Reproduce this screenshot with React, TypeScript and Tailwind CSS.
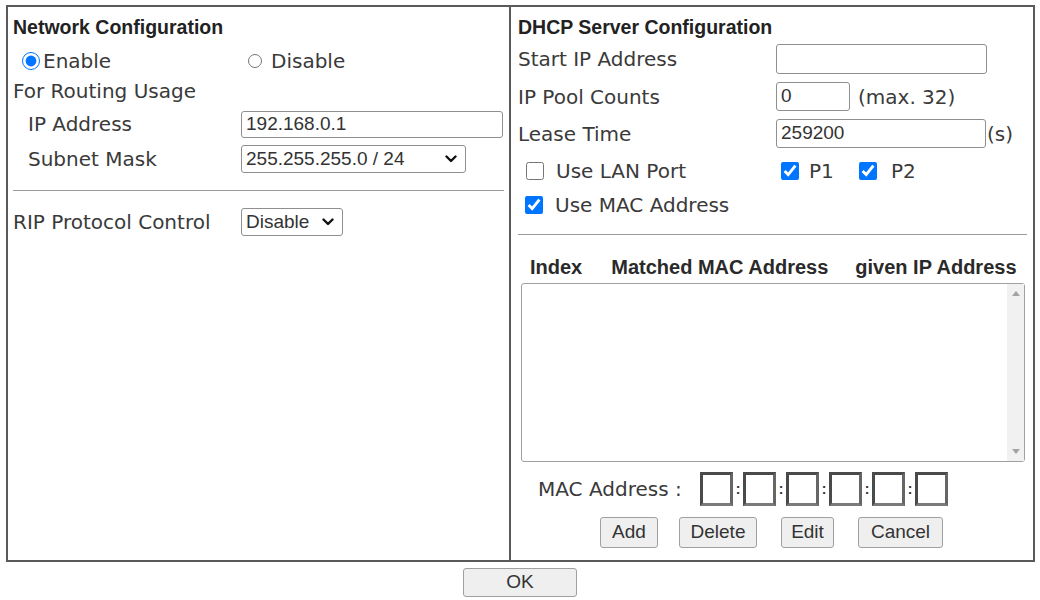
import React from 'react';

const label = "font-['DejaVu_Sans',sans-serif] text-[20px] text-[#3a3a3a] whitespace-nowrap";
const arial = "font-['Liberation_Sans',Arial,sans-serif]";
const heading = "font-['Liberation_Sans',Arial,sans-serif] font-bold text-[19.5px] text-[#222] whitespace-nowrap";

const Chevron = () => (
  <svg width="12" height="8" viewBox="0 0 12 8" className="shrink-0">
    <path d="M1.5 1.5 L6 6 L10.5 1.5" fill="none" stroke="#111" strokeWidth="2.4" strokeLinecap="round" strokeLinejoin="round" />
  </svg>
);

const FakeSelect = ({ value, width }: { value: string; width: string }) => (
  <div className={`${width} h-[28px] border border-[#8f8f8f] rounded-[3px] bg-white flex items-center justify-between pl-[4px] pr-[8px] ${arial} text-[19px] text-[#333] whitespace-nowrap`}>
    <span>{value}</span>
    <Chevron />
  </div>
);

const TextBox = ({ value, width, height = 'h-[29px]' }: { value?: string; width: string; height?: string }) => (
  <div className={`${width} ${height} border border-[#8f8f8f] rounded-[3px] bg-white flex items-center pl-[4px] ${arial} text-[19px] text-[#333]`}>
    {value}
  </div>
);

const Btn = ({ text, width }: { text: string; width: string }) => (
  <div className={`${width} h-[31px] border border-[#a0a0a0] rounded-[3px] bg-[#efefef] flex items-center justify-center ${arial} text-[19px] text-[#333]`}>
    {text}
  </div>
);

const Check = ({ checked }: { checked?: boolean }) => (
  <input type="checkbox" defaultChecked={checked} className="w-[18px] h-[18px] m-0 shrink-0 accent-[#0075ff]" />
);

const MacBox = () => (
  <div className="w-[33px] h-[34px] border-[3px] border-[#4a4a4a] border-b-[#7a7a7a] border-r-[#666] bg-white" />
);

export default function App() {
  return (
    <div className="w-[1040px] h-[600px] bg-white overflow-hidden">
      <div className="ml-[6px] mt-[5px] w-[1029px] h-[557px] border-2 border-[#5a5a5a] flex">
        {/* Network Configuration */}
        <div className="w-[503px] border-r-2 border-[#5a5a5a] flex flex-col">
          <div className={`h-[40px] flex items-center pl-[5px] pt-[1px] ${heading}`}>Network Configuration</div>
          <div className={`h-[28px] flex items-center pl-[14px] ${label}`}>
            <label className="flex items-center w-[226px]">
              <input type="radio" name="net" defaultChecked className="w-[18px] h-[18px] m-0 mr-[3px] accent-[#0075ff]" />
              Enable
            </label>
            <label className="flex items-center">
              <input type="radio" name="net" className="w-[14px] h-[14px] m-0 mr-[9px]" />
              Disable
            </label>
          </div>
          <div className={`h-[32px] flex items-center pl-[5px] ${label}`}>For Routing Usage</div>
          <div className="h-[34px] flex items-center">
            <div className={`w-[233px] pl-[20px] ${label}`}>IP Address</div>
            <TextBox value="192.168.0.1" width="w-[262px]" height="h-[27px]" />
          </div>
          <div className="h-[36px] flex items-center">
            <div className={`w-[233px] pl-[20px] ${label}`}>Subnet Mask</div>
            <FakeSelect value="255.255.255.0 / 24" width="w-[225px]" />
          </div>
          <div className="h-[13px]" />
          <div className="mx-[5px] border-t border-[#9a9a9a]" />
          <div className="h-[14px]" />
          <div className="h-[34px] flex items-center">
            <div className={`w-[233px] pl-[5px] ${label}`}>RIP Protocol Control</div>
            <FakeSelect value="Disable" width="w-[102px]" />
          </div>
        </div>

        {/* DHCP Server Configuration */}
        <div className="flex-1 flex flex-col">
          <div className={`h-[37px] flex items-center pl-[7px] pt-[4px] ${heading}`}>DHCP Server Configuration</div>
          <div className="h-[30px] flex items-center">
            <div className={`w-[265px] pl-[7px] ${label}`}>Start IP Address</div>
            <TextBox width="w-[211px]" height="h-[30px]" />
          </div>
          <div className="h-[8px]" />
          <div className="h-[29px] flex items-center">
            <div className={`w-[265px] pl-[7px] ${label}`}>IP Pool Counts</div>
            <TextBox value="0" width="w-[74px]" />
            <span className={`ml-[8px] ${label}`}>(max. 32)</span>
          </div>
          <div className="h-[8px]" />
          <div className="h-[29px] flex items-center">
            <div className={`w-[265px] pl-[7px] ${label}`}>Lease Time</div>
            <TextBox value="259200" width="w-[210px]" />
            <span className={`ml-[1px] ${label}`}>(s)</span>
          </div>
          <div className="h-[8px]" />
          <div className="h-[30px] flex items-center">
            <div className={`w-[270px] pl-[15px] flex items-center gap-[12px] ${label}`}>
              <Check />
              Use LAN Port
            </div>
            <div className={`flex items-center gap-[10px] w-[78px] ${label}`}>
              <Check checked />
              P1
            </div>
            <div className={`flex items-center gap-[14px] ${label}`}>
              <Check checked />
              P2
            </div>
          </div>
          <div className="h-[4px]" />
          <div className={`h-[30px] flex items-center pl-[14px] gap-[12px] ${label}`}>
            <Check checked />
            Use MAC Address
          </div>
          <div className="h-[14px]" />
          <div className="ml-[7px] mr-[6px] border-t border-[#9a9a9a]" />
          <div className={`h-[48px] flex items-center pt-[16px] ${arial} font-bold text-[20px] text-[#2a2a2a] whitespace-nowrap`}>
            <span className="ml-[19px]">Index</span>
            <span className="ml-[29px]">Matched MAC Address</span>
            <span className="ml-[27px]">given IP Address</span>
          </div>
          <div className="ml-[10px] w-[504px] h-[179px] border border-[#a0a0a0] rounded-[3px] bg-white flex">
            <div className="flex-1" />
            <div className="w-[17px] bg-[#f1f1f1] flex flex-col items-center justify-between py-[7px]">
              <svg width="8" height="5" viewBox="0 0 8 5"><path d="M0 5 L4 0 L8 5 Z" fill="#a3a3a3" /></svg>
              <svg width="8" height="5" viewBox="0 0 8 5"><path d="M0 0 L4 5 L8 0 Z" fill="#a3a3a3" /></svg>
            </div>
          </div>
          <div className="h-[42px] flex items-center mt-[6px]">
            <div className={`w-[189px] pl-[27px] ${label}`}>MAC Address :</div>
            {[0, 1, 2, 3, 4, 5].map((i) => (
              <React.Fragment key={i}>
                {i > 0 && <span className={`w-[10px] text-center ${arial} font-bold text-[14px] text-[#333] leading-none`}>:</span>}
                <MacBox />
              </React.Fragment>
            ))}
          </div>
          <div className="h-[7px]" />
          <div className="flex items-center pl-[89px]">
            <Btn text="Add" width="w-[58px]" />
            <div className="w-[21px]" />
            <Btn text="Delete" width="w-[78px]" />
            <div className="w-[24px]" />
            <Btn text="Edit" width="w-[53px]" />
            <div className="w-[24px]" />
            <Btn text="Cancel" width="w-[85px]" />
          </div>
        </div>
      </div>
      <div className="flex justify-center mt-[6px]">
        <div className={`w-[114px] h-[29px] border border-[#a0a0a0] rounded-[3px] bg-[#efefef] flex items-center justify-center ${arial} text-[19px] text-[#333]`}>
          OK
        </div>
      </div>
    </div>
  );
}
